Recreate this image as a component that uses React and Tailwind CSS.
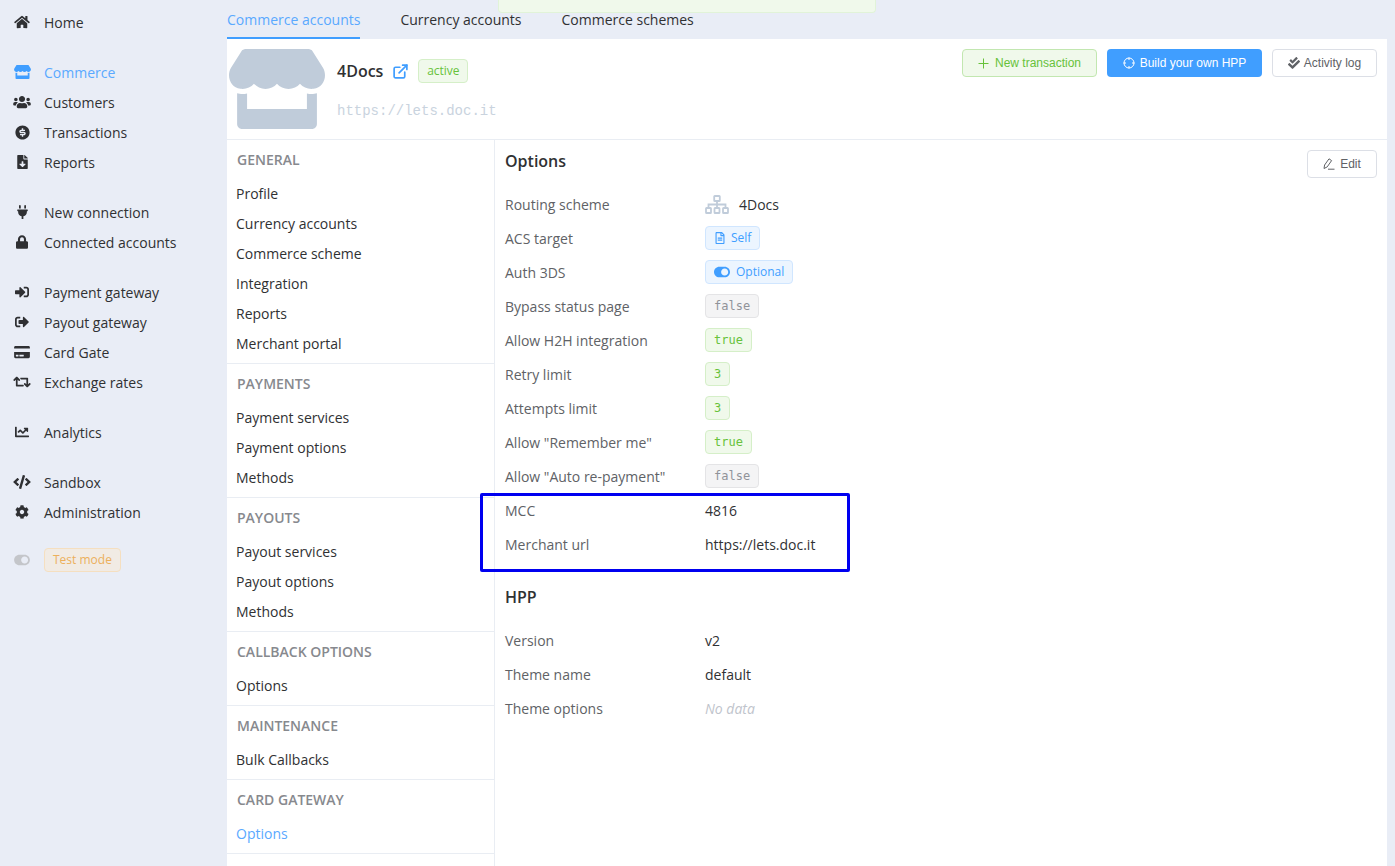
import {
    FaHome,
    FaStore,
    FaUsers,
    FaFileDownload,
    FaPlug,
    FaLock,
    FaSignInAlt,
    FaSignOutAlt,
    FaCreditCard,
    FaRetweet,
    FaChartLine,
    FaCode,
    FaCog,
    FaToggleOn,
    FaCheckDouble,
    FaRegFileAlt,
} from 'react-icons/fa';
import { RiMoneyDollarCircleFill } from 'react-icons/ri';
import { FiExternalLink } from 'react-icons/fi';

// box classes keep each glyph at its natural width for a 14px tall icon
const navGroups = [
    [{ label: 'Home', icon: FaHome, box: 'h-[14px] w-[16px]' }],
    [
        { label: 'Commerce', icon: FaStore, box: 'h-[14px] w-[17px]', active: true },
        { label: 'Customers', icon: FaUsers, box: 'h-[14px] w-[18px]' },
        { label: 'Transactions', icon: RiMoneyDollarCircleFill, box: 'h-[17px] w-[17px]' },
        { label: 'Reports', icon: FaFileDownload, box: 'h-[14px] w-[11px]' },
    ],
    [
        { label: 'New connection', icon: FaPlug, box: 'h-[14px] w-[11px]' },
        { label: 'Connected accounts', icon: FaLock, box: 'h-[14px] w-[12px]' },
    ],
    [
        { label: 'Payment gateway', icon: FaSignInAlt, box: 'h-[14px] w-[14px]' },
        { label: 'Payout gateway', icon: FaSignOutAlt, box: 'h-[14px] w-[14px]' },
        { label: 'Card Gate', icon: FaCreditCard, box: 'h-[14px] w-[16px]' },
        { label: 'Exchange rates', icon: FaRetweet, box: 'h-[14px] w-[18px]' },
    ],
    [{ label: 'Analytics', icon: FaChartLine, box: 'h-[14px] w-[14px]' }],
    [
        { label: 'Sandbox', icon: FaCode, box: 'h-[14px] w-[18px]' },
        { label: 'Administration', icon: FaCog, box: 'h-[14px] w-[14px]' },
    ],
];

const menuSections = [
    { title: 'GENERAL', items: ['Profile', 'Currency accounts', 'Commerce scheme', 'Integration', 'Reports', 'Merchant portal'] },
    { title: 'PAYMENTS', items: ['Payment services', 'Payment options', 'Methods'] },
    { title: 'PAYOUTS', items: ['Payout services', 'Payout options', 'Methods'] },
    { title: 'CALLBACK OPTIONS', items: ['Options'] },
    { title: 'MAINTENANCE', items: ['Bulk Callbacks'] },
    { title: 'CARD GATEWAY', items: ['Options'], activeItem: 'Options' },
];

function SitemapIcon() {
    return (
        <svg width="24" height="19" viewBox="0 0 24 19" fill="none" stroke="#c0ccda" strokeWidth="1.8">
            <rect x="9.2" y="1" width="5.6" height="5" rx="0.6" />
            <rect x="1" y="13" width="5" height="5" rx="0.6" />
            <rect x="9.5" y="13" width="5" height="5" rx="0.6" />
            <rect x="18" y="13" width="5" height="5" rx="0.6" />
            <path d="M12 6v7M3.5 13V9.5h17V13" />
        </svg>
    );
}

function AimIcon() {
    return (
        <svg width="12" height="12" viewBox="0 0 12 12" fill="none" stroke="currentColor" strokeWidth="1">
            <circle cx="6" cy="6" r="5" />
            <path d="M6 0.5v2.5M6 9v2.5M0.5 6h2.5M9 6h2.5" />
        </svg>
    );
}

function PlusIcon() {
    return (
        <svg width="11" height="11" viewBox="0 0 11 11" fill="none" stroke="currentColor" strokeWidth="1">
            <path d="M5.5 0.5v10M0.5 5.5h10" />
        </svg>
    );
}

function PenIcon() {
    return (
        <svg width="12" height="12" viewBox="0 0 12 12" fill="none" stroke="currentColor" strokeWidth="1">
            <path d="M1 10.5l0.6-3.5L6 0.8l2.6 1.8-4.4 6.3z" />
            <path d="M5 11.2h6.5" />
        </svg>
    );
}

function SideNav() {
    return (
        <aside className="w-[227px] shrink-0 pt-[7px] text-[14px] text-[#303133]">
            {navGroups.map((group, i) => (
                <div key={i} className="mb-5">
                    {group.map(({ label, icon: Icon, active, box }) => (
                        <div key={label} className={`flex h-[30px] items-center ${active ? 'text-[#5aa9ff]' : ''}`}>
                            <span className={`flex w-[44px] justify-center ${active ? 'text-[#409eff]' : 'text-[#2f3033]'}`}>
                                <Icon className={box} />
                            </span>
                            <span>{label}</span>
                        </div>
                    ))}
                </div>
            ))}
            <div className="flex items-center pt-px">
                <span className="flex w-[44px] justify-center text-[#c4c6ca]">
                    <FaToggleOn className="h-[14px] w-[16px]" />
                </span>
                <span className="flex h-6 items-center rounded border border-[#f5dfc0] bg-[#f1ebe4] px-2 text-[12px] text-[#ecb05c]">
                    Test mode
                </span>
            </div>
        </aside>
    );
}

function Tabs() {
    return (
        <div className="flex h-[39px] items-stretch gap-10 pt-px text-[14px] text-[#303133]">
            <div className="flex items-center border-b-2 border-[#409eff] text-[#5aa9ff]">Commerce accounts</div>
            <div className="flex items-center border-b-2 border-transparent">Currency accounts</div>
            <div className="flex items-center border-b-2 border-transparent">Commerce schemes</div>
        </div>
    );
}

function Tag({ tone = 'green', mono, children }) {
    const tones = {
        green: 'border-[#d5efc8] bg-[#f0f9eb] text-[#67c23a]',
        blue: 'border-[#d0e6ff] bg-[#ecf5ff] text-[#409eff]',
        gray: 'border-[#e4e4e6] bg-[#f4f4f5] text-[#909399]',
    };
    return (
        <span
            className={`inline-flex h-6 items-center rounded border px-2 text-[12px] ${tones[tone]} ${
                mono ? "font-['DejaVu_Sans_Mono',monospace]" : ''
            }`}
        >
            {children}
        </span>
    );
}

function Row({ label, children }) {
    return (
        <div className="flex h-[34px] items-center">
            <div className="w-[200px] shrink-0 text-[#606266]">{label}</div>
            <div className="flex items-center text-[#303133]">{children}</div>
        </div>
    );
}

function SideMenu() {
    return (
        <div className="w-[268px] shrink-0 border-r border-[#e9edf3]">
            {menuSections.map((section) => (
                <div key={section.title} className="border-b border-[#e9edf3] pt-[9px] pb-[5px]">
                    <div className="flex h-[20px] items-center pl-[10px] font-semibold text-[#87898e]">{section.title}</div>
                    <div className="pt-[9px]">
                        {section.items.map((item, idx) => (
                            <div
                                key={idx}
                                className={`flex h-[30px] items-center pl-[9px] ${
                                    section.activeItem === item ? 'text-[#5aa9ff]' : 'text-[#303133]'
                                }`}
                            >
                                {item}
                            </div>
                        ))}
                    </div>
                </div>
            ))}
        </div>
    );
}

function OptionsPanel() {
    return (
        <div className="flex-1 pl-[10px] pr-[10px]">
            <div className="flex items-start justify-between pt-[10px]">
                <h2 className="text-[16px] leading-[22px] font-semibold text-[#303133]">Options</h2>
                <button className="flex h-7 w-[70px] items-center justify-center gap-[5px] rounded border border-[#dcdfe6] bg-white font-['Liberation_Sans',sans-serif] text-[12px] text-[#606266]">
                    <PenIcon />
                    Edit
                </button>
            </div>
            <div className="pt-[9px]">
                <Row label="Routing scheme">
                    <span className="flex items-center gap-[10px]">
                        <SitemapIcon />
                        4Docs
                    </span>
                </Row>
                <Row label="ACS target">
                    <Tag tone="blue">
                        <FaRegFileAlt size={12} className="mr-[5px]" />
                        Self
                    </Tag>
                </Row>
                <Row label="Auth 3DS">
                    <Tag tone="blue">
                        <FaToggleOn size={16} className="mr-[6px]" />
                        Optional
                    </Tag>
                </Row>
                <Row label="Bypass status page"><Tag tone="gray" mono>false</Tag></Row>
                <Row label="Allow H2H integration"><Tag mono>true</Tag></Row>
                <Row label="Retry limit"><Tag mono>3</Tag></Row>
                <Row label="Attempts limit"><Tag mono>3</Tag></Row>
                <Row label={'Allow "Remember me"'}><Tag mono>true</Tag></Row>
                <Row label={'Allow "Auto re-payment"'}><Tag tone="gray" mono>false</Tag></Row>
                <Row label="MCC">4816</Row>
                <Row label="Merchant url">https://lets.doc.it</Row>
            </div>
            <h2 className="pt-[25px] pb-[15px] text-[16px] leading-[22px] font-semibold text-[#303133]">HPP</h2>
            <Row label="Version">v2</Row>
            <Row label="Theme name">default</Row>
            <Row label="Theme options">
                <span className="text-[#c0c4cc] italic">No data</span>
            </Row>
        </div>
    );
}

export default function App() {
    return (
        <div className="relative flex h-[866px] overflow-hidden bg-[#e9edf6] font-['Open_Sans',sans-serif] text-[14px]">
            <SideNav />
            <main className="flex min-w-0 flex-1 flex-col pr-[8px]">
                <Tabs />
                <div className="flex flex-1 flex-col bg-white">
                    <div className="flex h-[101px] shrink-0 items-start border-b border-[#e9edf3] pr-[10px]">
                        <FaStore size={80} className="mt-[10px] ml-[2px] w-[96px] text-[#c0ccda]" />
                        <div className="ml-[12px] flex flex-col pt-[20px]">
                            <div className="flex h-6 items-center">
                                <span className="text-[16px] font-semibold text-[#303133]">4Docs</span>
                                <FiExternalLink size={17} className="ml-[9px] text-[#409eff]" strokeWidth={2.4} />
                                <span className="ml-[9px] inline-flex h-6 w-[50px] items-center justify-center rounded border border-[#d5efc8] bg-[#f0f9eb] text-[12px] text-[#67c23a]">
                                    active
                                </span>
                            </div>
                            <div className="pt-[18px] font-['Liberation_Mono',monospace] text-[14px] text-[#c9d3de]">
                                https://lets.doc.it
                            </div>
                        </div>
                        <div className="ml-auto flex gap-[10px] pt-[10px] font-['Liberation_Sans',sans-serif] text-[12px]">
                            <button className="flex h-7 w-[135px] items-center justify-center gap-[6px] rounded border border-[#c2e7b0] bg-[#f0f9eb] text-[#67c23a]">
                                <PlusIcon />
                                New transaction
                            </button>
                            <button className="flex h-7 w-[155px] items-center justify-center gap-[5px] rounded bg-[#409eff] text-white">
                                <AimIcon />
                                Build your own HPP
                            </button>
                            <button className="flex h-7 w-[105px] items-center justify-center gap-1 rounded border border-[#dcdfe6] bg-white text-[#606266]">
                                <FaCheckDouble size={12} />
                                Activity log
                            </button>
                        </div>
                    </div>
                    <div className="flex flex-1">
                        <SideMenu />
                        <OptionsPanel />
                    </div>
                </div>
            </main>
            {/* toast peeking in at the top */}
            <div className="absolute top-0 left-[498px] h-[13px] w-[378px] rounded-b border border-t-0 border-[#e1f3d8] bg-[#f0f9eb]" />
            {/* annotation box */}
            <div className="absolute top-[493px] left-[480px] h-[79px] w-[370px] rounded-[2px] border-[3px] border-[#0000f0]" />
        </div>
    );
}
